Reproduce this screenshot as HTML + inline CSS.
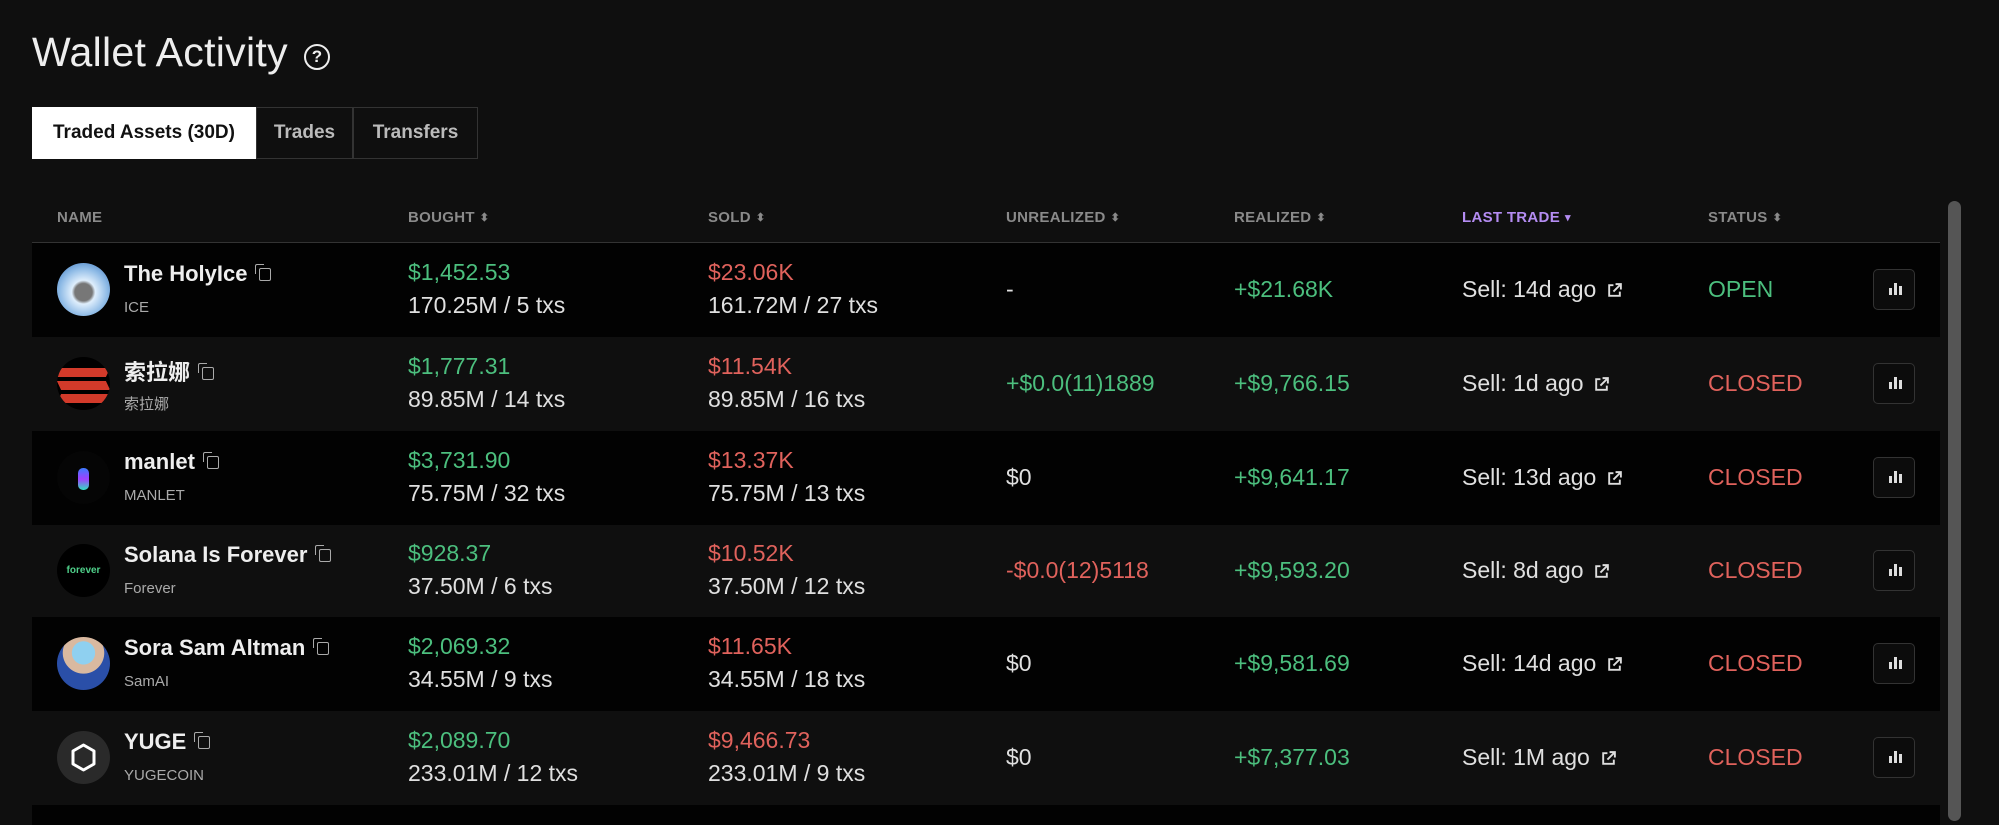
<!DOCTYPE html>
<html><head><meta charset="utf-8"><style>
*{margin:0;padding:0;box-sizing:border-box}
html,body{width:1999px;height:825px;overflow:hidden}
body{background:#0f0f0f;font-family:"Liberation Sans","Noto Sans CJK SC",sans-serif;color:#e6e6e6;position:relative}
h1{position:absolute;left:32px;top:29px;font-size:41px;font-weight:400;color:#eee;letter-spacing:0.3px}
.q{position:absolute;left:304px;top:44px;width:26px;height:26px;border:2.5px solid #eee;border-radius:50%;font-size:17px;font-weight:700;text-align:center;line-height:21px;color:#eee}
.tabs{position:absolute;left:32px;top:107px;height:52px;display:flex}
.tab{height:52px;border:1px solid #333;color:#bbb;font-size:19px;font-weight:700;display:flex;align-items:center;justify-content:center}
.tab.a{background:#fff;color:#111;border-color:#fff}
.th{position:absolute;top:209px;font-size:15px;font-weight:700;color:#8a8a8a;letter-spacing:0.3px}
.ar{font-size:11px;margin-left:5px;vertical-align:1px}
.line{position:absolute;left:32px;top:242px;width:1908px;height:1px;background:#333}
.row{position:absolute;left:32px;width:1908px;height:94px}
.c{position:absolute;font-size:23px;color:#e0e0e0;white-space:nowrap}
.l1{top:16px}.l2{top:49px}.mid{top:33px}
.g{color:#4cbf7e}.r{color:#e0625c}
.av{position:absolute;left:25px;top:20px;width:53px;height:53px;border-radius:50%;overflow:hidden}
.nm{position:absolute;left:92px;top:18px;font-size:22px;font-weight:700;color:#eee;white-space:nowrap}
.sym{position:absolute;left:92px;top:56px;font-size:15px;color:#aaa}
.cp{display:inline-block;width:12px;height:13px;border:1.6px solid #aaa;border-radius:2px;margin-left:12px;position:relative;vertical-align:0px}
.cp:before{content:"";position:absolute;left:-5px;top:-5px;width:8px;height:9px;border-left:1.6px solid #aaa;border-top:1.6px solid #aaa;border-radius:2px 0 0 0}
.btn{position:absolute;left:1841px;top:26px;width:42px;height:41px;border:1px solid #333;border-radius:5px;background:#0c0c0c}
.btn i{position:absolute;bottom:14px;width:2.5px;background:#ddd}
.ext{display:inline-block;vertical-align:-2px;margin-left:10px}
.sb{position:absolute;left:1948px;top:201px;width:13px;height:620px;background:#555;border-radius:7px}
</style></head><body>
<h1>Wallet Activity</h1><div class="q">?</div>
<div class="tabs"><div class="tab a" style="width:224px">Traded Assets (30D)</div><div class="tab" style="width:97px">Trades</div><div class="tab" style="width:125px">Transfers</div></div>
<div class="th" style="left:57px">NAME</div>
<div class="th" style="left:408px">BOUGHT<span class="ar">⬍</span></div>
<div class="th" style="left:708px">SOLD<span class="ar">⬍</span></div>
<div class="th" style="left:1006px">UNREALIZED<span class="ar">⬍</span></div>
<div class="th" style="left:1234px">REALIZED<span class="ar">⬍</span></div>
<div class="th" style="left:1462px;color:#b48cf2">LAST TRADE<span class="ar">▾</span></div>
<div class="th" style="left:1708px">STATUS<span class="ar">⬍</span></div>
<div class="line"></div>

<div class="row" style="top:243px;background:#020202">
<div class="av" style="background:radial-gradient(circle at 50% 55%,#777 0 22%,#dfeefc 30%,#8fbbe6 60%,#2f6db8 100%)"></div>
<div class="nm">The HolyIce<span class="cp"></span></div><div class="sym">ICE</div>
<div class="c l1 g" style="left:376px">$1,452.53</div><div class="c l2" style="left:376px">170.25M / 5 txs</div>
<div class="c l1 r" style="left:676px">$23.06K</div><div class="c l2" style="left:676px">161.72M / 27 txs</div>
<div class="c mid" style="left:974px">-</div>
<div class="c mid g" style="left:1202px">+$21.68K</div>
<div class="c mid" style="left:1430px">Sell: 14d ago<svg class="ext" width="17" height="17" viewBox="0 0 16 16" fill="none" stroke="#ddd" stroke-width="1.8"><path d="M7 3H3v10h10V9M9 2h5v5M14 2L7 9"/></svg></div>
<div class="c mid g" style="left:1676px">OPEN</div>
<div class="btn"><i style="left:15px;height:7px"></i><i style="left:20px;height:12px"></i><i style="left:25px;height:9px"></i></div>
</div>

<div class="row" style="top:337px">
<div class="av" style="background:#000"><div style="position:absolute;left:2px;top:11px;width:49px;height:9px;background:#d23a2a;transform:skewX(-25deg)"></div><div style="position:absolute;left:2px;top:24px;width:49px;height:9px;background:#d23a2a;transform:skewX(25deg)"></div><div style="position:absolute;left:2px;top:37px;width:49px;height:9px;background:#d23a2a;transform:skewX(-25deg)"></div></div>
<div class="nm">索拉娜<span class="cp"></span></div><div class="sym">索拉娜</div>
<div class="c l1 g" style="left:376px">$1,777.31</div><div class="c l2" style="left:376px">89.85M / 14 txs</div>
<div class="c l1 r" style="left:676px">$11.54K</div><div class="c l2" style="left:676px">89.85M / 16 txs</div>
<div class="c mid g" style="left:974px">+$0.0(11)1889</div>
<div class="c mid g" style="left:1202px">+$9,766.15</div>
<div class="c mid" style="left:1430px">Sell: 1d ago<svg class="ext" width="17" height="17" viewBox="0 0 16 16" fill="none" stroke="#ddd" stroke-width="1.8"><path d="M7 3H3v10h10V9M9 2h5v5M14 2L7 9"/></svg></div>
<div class="c mid r" style="left:1676px">CLOSED</div>
<div class="btn"><i style="left:15px;height:7px"></i><i style="left:20px;height:12px"></i><i style="left:25px;height:9px"></i></div>
</div>

<div class="row" style="top:431px;background:#020202">
<div class="av" style="background:#050505"><div style="position:absolute;left:21px;top:17px;width:11px;height:22px;border-radius:5px;background:linear-gradient(#3b7bff,#a040ff,#30e0c0)"></div></div>
<div class="nm">manlet<span class="cp"></span></div><div class="sym">MANLET</div>
<div class="c l1 g" style="left:376px">$3,731.90</div><div class="c l2" style="left:376px">75.75M / 32 txs</div>
<div class="c l1 r" style="left:676px">$13.37K</div><div class="c l2" style="left:676px">75.75M / 13 txs</div>
<div class="c mid" style="left:974px">$0</div>
<div class="c mid g" style="left:1202px">+$9,641.17</div>
<div class="c mid" style="left:1430px">Sell: 13d ago<svg class="ext" width="17" height="17" viewBox="0 0 16 16" fill="none" stroke="#ddd" stroke-width="1.8"><path d="M7 3H3v10h10V9M9 2h5v5M14 2L7 9"/></svg></div>
<div class="c mid r" style="left:1676px">CLOSED</div>
<div class="btn"><i style="left:15px;height:7px"></i><i style="left:20px;height:12px"></i><i style="left:25px;height:9px"></i></div>
</div>

<div class="row" style="top:524px">
<div class="av" style="background:#000;color:#4fd08a;font-size:10px;font-weight:700;text-align:center;line-height:53px">forever</div>
<div class="nm">Solana Is Forever<span class="cp"></span></div><div class="sym">Forever</div>
<div class="c l1 g" style="left:376px">$928.37</div><div class="c l2" style="left:376px">37.50M / 6 txs</div>
<div class="c l1 r" style="left:676px">$10.52K</div><div class="c l2" style="left:676px">37.50M / 12 txs</div>
<div class="c mid r" style="left:974px">-$0.0(12)5118</div>
<div class="c mid g" style="left:1202px">+$9,593.20</div>
<div class="c mid" style="left:1430px">Sell: 8d ago<svg class="ext" width="17" height="17" viewBox="0 0 16 16" fill="none" stroke="#ddd" stroke-width="1.8"><path d="M7 3H3v10h10V9M9 2h5v5M14 2L7 9"/></svg></div>
<div class="c mid r" style="left:1676px">CLOSED</div>
<div class="btn"><i style="left:15px;height:7px"></i><i style="left:20px;height:12px"></i><i style="left:25px;height:9px"></i></div>
</div>

<div class="row" style="top:617px;background:#020202">
<div class="av" style="background:radial-gradient(circle at 50% 30%,#8fd0f0 0 25%,#d9b9a0 26% 45%,#2a4fa8 46% 80%,#1a2a50 100%)"></div>
<div class="nm">Sora Sam Altman<span class="cp"></span></div><div class="sym">SamAI</div>
<div class="c l1 g" style="left:376px">$2,069.32</div><div class="c l2" style="left:376px">34.55M / 9 txs</div>
<div class="c l1 r" style="left:676px">$11.65K</div><div class="c l2" style="left:676px">34.55M / 18 txs</div>
<div class="c mid" style="left:974px">$0</div>
<div class="c mid g" style="left:1202px">+$9,581.69</div>
<div class="c mid" style="left:1430px">Sell: 14d ago<svg class="ext" width="17" height="17" viewBox="0 0 16 16" fill="none" stroke="#ddd" stroke-width="1.8"><path d="M7 3H3v10h10V9M9 2h5v5M14 2L7 9"/></svg></div>
<div class="c mid r" style="left:1676px">CLOSED</div>
<div class="btn"><i style="left:15px;height:7px"></i><i style="left:20px;height:12px"></i><i style="left:25px;height:9px"></i></div>
</div>

<div class="row" style="top:711px">
<div class="av" style="background:#2a2a2a"><svg width="53" height="53" viewBox="0 0 53 53"><path d="M26.5 14L37 20v13l-10.5 6L16 33V20z" fill="none" stroke="#fff" stroke-width="3" stroke-linejoin="round"/></svg></div>
<div class="nm">YUGE<span class="cp"></span></div><div class="sym">YUGECOIN</div>
<div class="c l1 g" style="left:376px">$2,089.70</div><div class="c l2" style="left:376px">233.01M / 12 txs</div>
<div class="c l1 r" style="left:676px">$9,466.73</div><div class="c l2" style="left:676px">233.01M / 9 txs</div>
<div class="c mid" style="left:974px">$0</div>
<div class="c mid g" style="left:1202px">+$7,377.03</div>
<div class="c mid" style="left:1430px">Sell: 1M ago<svg class="ext" width="17" height="17" viewBox="0 0 16 16" fill="none" stroke="#ddd" stroke-width="1.8"><path d="M7 3H3v10h10V9M9 2h5v5M14 2L7 9"/></svg></div>
<div class="c mid r" style="left:1676px">CLOSED</div>
<div class="btn"><i style="left:15px;height:7px"></i><i style="left:20px;height:12px"></i><i style="left:25px;height:9px"></i></div>
</div>

<div class="row" style="top:805px;height:20px;background:#020202"></div>
<div class="sb"></div>
</body></html>
